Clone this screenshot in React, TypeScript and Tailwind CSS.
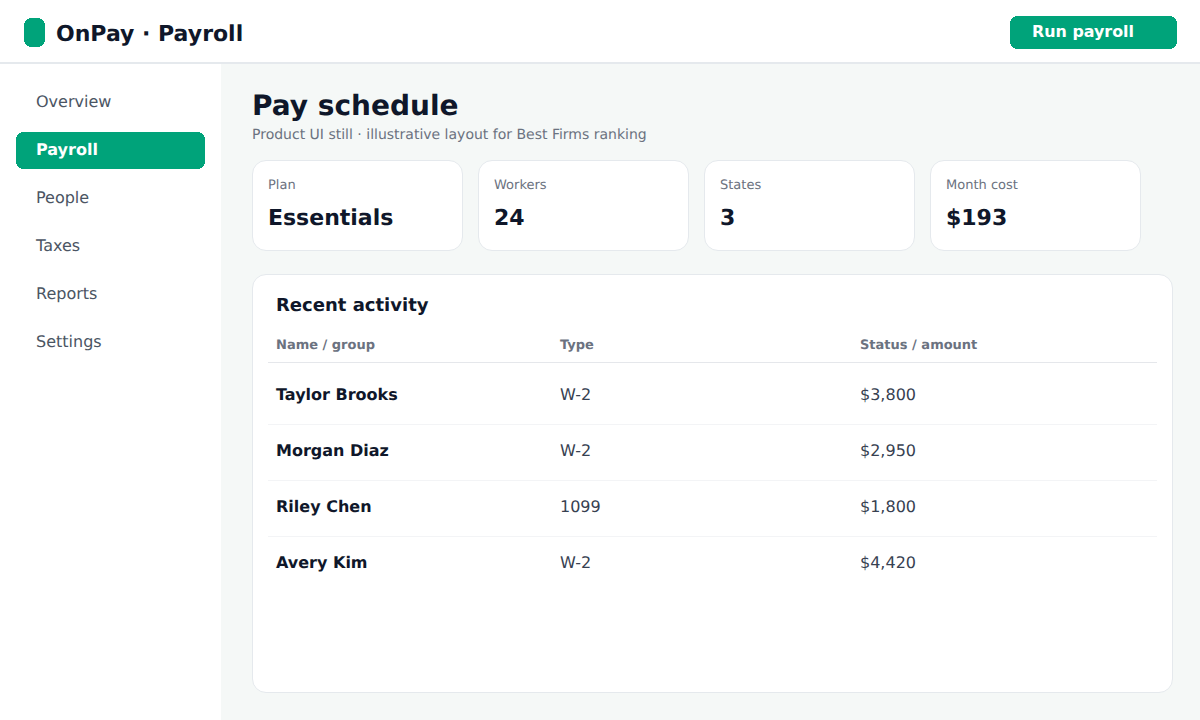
const NAV = ['Overview', 'Payroll', 'People', 'Taxes', 'Reports', 'Settings'];

const STATS = [
  { label: 'Plan', value: 'Essentials' },
  { label: 'Workers', value: '24' },
  { label: 'States', value: '3' },
  { label: 'Month cost', value: '$193' },
];

const ROWS = [
  { name: 'Taylor Brooks', type: 'W-2', amount: '$3,800' },
  { name: 'Morgan Diaz', type: 'W-2', amount: '$2,950' },
  { name: 'Riley Chen', type: '1099', amount: '$1,800' },
  { name: 'Avery Kim', type: 'W-2', amount: '$4,420' },
];

// the green shapes have hard stepped corners, not smooth ones
const STEPPED =
  '[clip-path:polygon(5px_0,calc(100%_-_5px)_0,calc(100%_-_5px)_1px,calc(100%_-_3px)_1px,calc(100%_-_3px)_2px,calc(100%_-_2px)_2px,calc(100%_-_2px)_3px,calc(100%_-_1px)_3px,calc(100%_-_1px)_5px,100%_5px,100%_calc(100%_-_5px),calc(100%_-_1px)_calc(100%_-_5px),calc(100%_-_1px)_calc(100%_-_3px),calc(100%_-_2px)_calc(100%_-_3px),calc(100%_-_2px)_calc(100%_-_2px),calc(100%_-_3px)_calc(100%_-_2px),calc(100%_-_3px)_calc(100%_-_1px),calc(100%_-_5px)_calc(100%_-_1px),calc(100%_-_5px)_100%,5px_100%,5px_calc(100%_-_1px),3px_calc(100%_-_1px),3px_calc(100%_-_2px),2px_calc(100%_-_2px),2px_calc(100%_-_3px),1px_calc(100%_-_3px),1px_calc(100%_-_5px),0_calc(100%_-_5px),0_5px,1px_5px,1px_3px,2px_3px,2px_2px,3px_2px,3px_1px,5px_1px)]';

export default function App() {
  return (
    <div className="h-[720px] w-[1200px] overflow-hidden flex flex-col bg-[#f5f8f7] font-['DejaVu_Sans',sans-serif] [text-rendering:geometricPrecision]">
      <header className="h-[64px] shrink-0 bg-white border-b-2 border-[#e5e9ed] flex items-center justify-between pt-[3px] pl-[24px] pr-[23px]">
        <div className="flex items-center gap-[11px]">
          <div className={`w-[21px] h-[29px] bg-[#00a37a] ${STEPPED}`} />
          <span className="text-[22px] font-bold text-[#0f172a] pt-[4px]">OnPay · Payroll</span>
        </div>
        <button type="button" className={`w-[167px] h-[33px] bg-[#00a37a] text-white text-[15.9px] font-bold text-left pl-[22px] pb-[1px] ${STEPPED}`}>
          Run payroll
        </button>
      </header>

      <div className="flex flex-1 min-h-0">
        <aside className="w-[221px] shrink-0 bg-white px-[16px] pt-[20px] flex flex-col gap-[11px]">
          {NAV.map((item) => (
            <div
              key={item}
              className={
                item === 'Payroll'
                  ? `h-[37px] w-[189px] bg-[#00a37a] text-white font-bold text-[16px] flex items-center pl-[20px] pb-[2px] ${STEPPED}`
                  : 'h-[37px] w-[189px] text-[#4b5563] text-[16px] flex items-center pl-[20px] pb-[2px]'
              }
            >
              {item}
            </div>
          ))}
        </aside>

        <main className="flex-1 pl-[31px] pr-[27px] pt-[23px]">
          <h1 className="text-[28px] leading-[38px] font-bold text-[#0f172a]">Pay schedule</h1>
          <p className="text-[14px] leading-[20px] text-[#6b7280]">
            Product UI still · illustrative layout for Best Firms ranking
          </p>

          <div className="flex gap-[15px] mt-[15px]">
            {STATS.map((stat) => (
              <div key={stat.label} className="w-[211px] h-[91px] bg-white border border-[#e5e9ed] rounded-[14px] pl-[15px] pt-[16px]">
                <div className="text-[13px] leading-[18px] text-[#6b7280]">{stat.label}</div>
                <div className="text-[22px] leading-[30px] font-bold text-[#0f172a] mt-[9px]">{stat.value}</div>
              </div>
            ))}
          </div>

          <section className="w-[921px] h-[419px] mt-[23px] bg-white border border-[#e5e9ed] rounded-[14px] px-[15px] pt-[19px]">
            <h2 className="text-[18px] leading-[24px] font-bold text-[#0f172a] pl-[8px]">Recent activity</h2>
            <div className="mt-[9px] h-[36px] pt-[2px] grid grid-cols-[284px_300px_1fr] items-center border-b border-[#e5e7eb] pl-[8px] text-[13px] font-bold text-[#6b7280]">
              <span>Name / group</span>
              <span>Type</span>
              <span>Status / amount</span>
            </div>
            <div className="pt-[6px]">
              {ROWS.map((row) => (
                <div key={row.name} className="h-[56px] pb-[3px] pl-[8px] grid grid-cols-[284px_300px_1fr] items-center border-b border-[#f3f4f6] last:border-b-transparent text-[16px]">
                  <span className="font-bold text-[#0f172a]">{row.name}</span>
                  <span className="text-[#374151]">{row.type}</span>
                  <span className="text-[#374151]">{row.amount}</span>
                </div>
              ))}
            </div>
          </section>
        </main>
      </div>
    </div>
  );
}
